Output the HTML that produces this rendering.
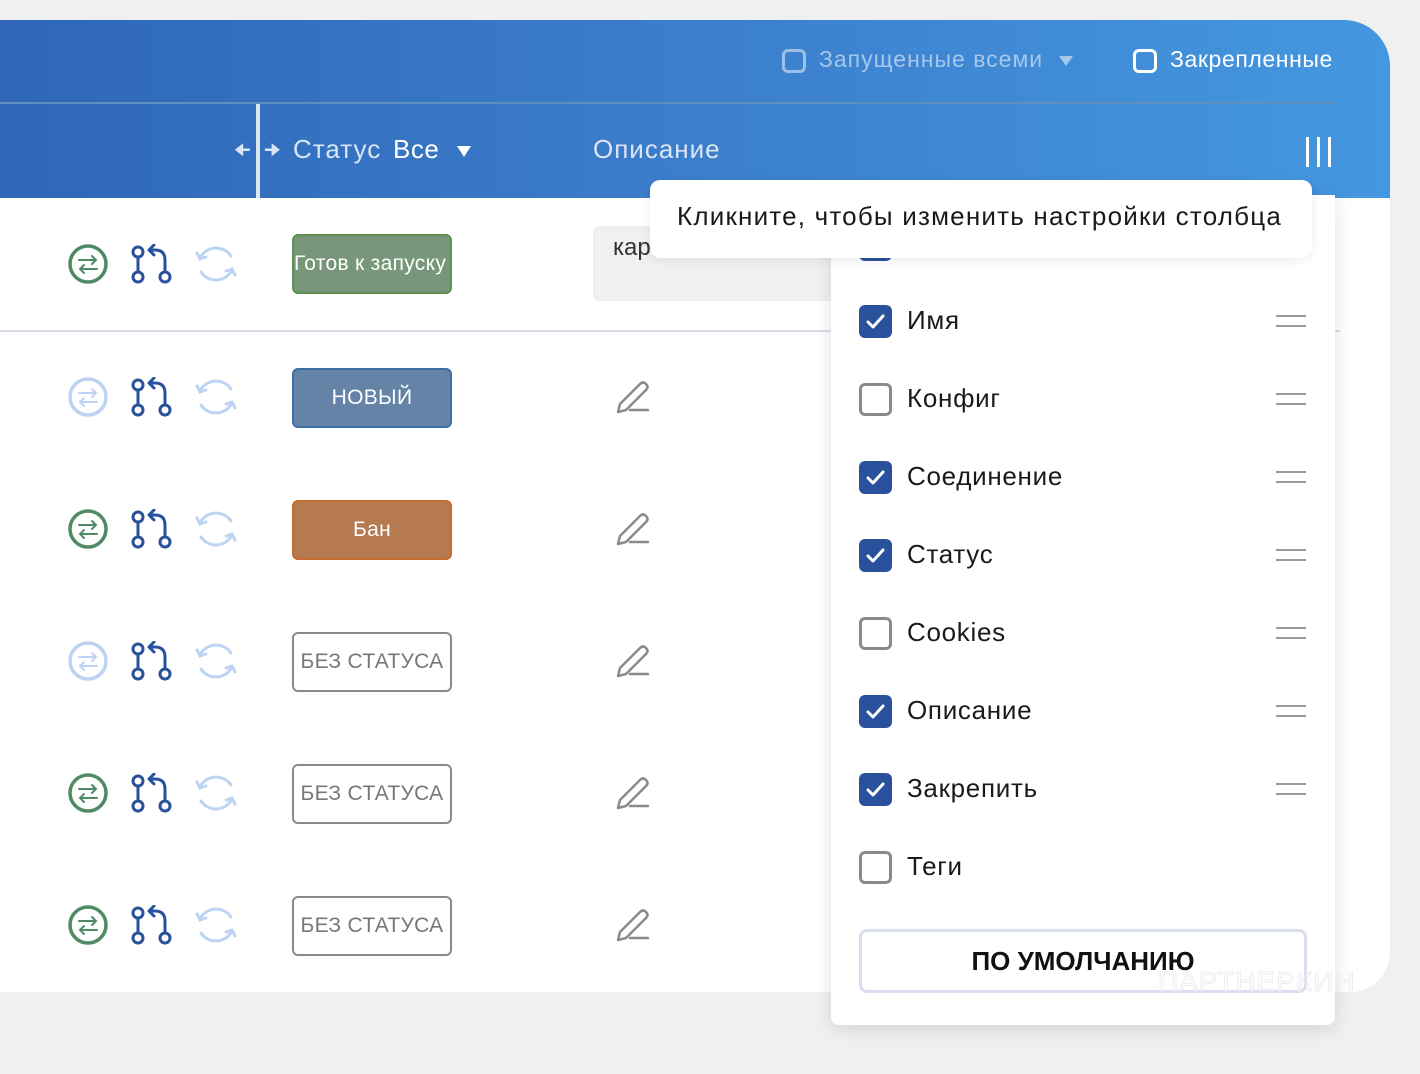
<!DOCTYPE html>
<html><head><meta charset="utf-8"><style>
*{margin:0;padding:0;box-sizing:border-box}
body{width:1420px;height:1074px;background:#f0f0f0;font-family:"Liberation Sans",sans-serif;position:relative;overflow:hidden}
.card{position:absolute;left:0;top:20px;width:1390px;height:972px;background:#fff;border-radius:0 46px 40px 0;overflow:hidden}
.hdr{position:absolute;left:0;top:0;width:1390px;height:178px;background:linear-gradient(90deg,#2f66b8 0%,#3a7cca 45%,#4597e0 100%)}
.a{position:absolute;white-space:nowrap}
.row{position:absolute;left:66px;width:190px;height:40px}
.badge{position:absolute;left:292px;width:160px;height:60px;border-radius:6px;border:2px solid;display:flex;align-items:center;justify-content:center;font-size:21px;letter-spacing:0.3px;overflow:hidden;white-space:nowrap}
.pen{position:absolute;left:612px;width:40px;height:40px}
.cb{position:absolute;left:859px;width:33px;height:33px;border-radius:6px}
.on{background:#2a519c}
.off{border:3px solid #8a8a8a;background:#fff}
.lbl{position:absolute;left:907px;font-size:26px;color:#1a1a1a;letter-spacing:0.7px}
.ham{position:absolute;left:1276px;width:30px;height:12px;border-top:2px solid #9a9a9a;border-bottom:2px solid #9a9a9a}
</style></head><body>
<div class="card">
 <div class="hdr">
  <div class="a" style="left:0;top:82px;width:1335px;height:2px;background:#5d8fbf"></div>
  <div class="a" style="left:782px;top:29px;width:24px;height:24px;border:3px solid #9cc0ea;border-radius:6px"></div>
  <div class="a" style="left:819px;top:26px;font-size:23px;color:#a6c6ec;letter-spacing:1px">Запущенные всеми</div>
  <div class="a" style="left:1059px;top:36px;width:0;height:0;border-left:7px solid transparent;border-right:7px solid transparent;border-top:10px solid #a6c6ec"></div>
  <div class="a" style="left:1133px;top:29px;width:24px;height:24px;border:3px solid #fff;border-radius:6px"></div>
  <div class="a" style="left:1170px;top:26px;font-size:23px;color:#fff;letter-spacing:0.6px">Закрепленные</div>
  <div class="a" style="left:256px;top:84px;width:4px;height:94px;background:#dbe6f5"></div>
  <div class="a" style="left:234px;top:118px;font-size:18px;color:#dbe6f5">&#129032;</div>
  <div class="a" style="left:264px;top:118px;font-size:18px;color:#dbe6f5">&#129034;</div>
  <div class="a" style="left:293px;top:114px;font-size:26px;color:#dbe6f5;letter-spacing:1px">Статус</div>
  <div class="a" style="left:393px;top:114px;font-size:26px;color:#fff;letter-spacing:0.5px">Все</div>
  <div class="a" style="left:457px;top:126px;width:0;height:0;border-left:7px solid transparent;border-right:7px solid transparent;border-top:11px solid #fff"></div>
  <div class="a" style="left:593px;top:114px;font-size:26px;color:#dbe6f5;letter-spacing:1px">Описание</div>
  <div class="a" style="left:1306px;top:117px;width:3px;height:30px;background:#fff"></div>
  <div class="a" style="left:1317px;top:117px;width:3px;height:30px;background:#fff"></div>
  <div class="a" style="left:1328px;top:117px;width:3px;height:30px;background:#fff"></div>
 </div>
 <div class="a" style="left:0;top:310px;width:1340px;height:2px;background:#d6deec"></div>
 <div class="a" style="left:593px;top:206px;width:260px;height:75px;background:#f0f0f0;border-radius:6px;font-size:24px;color:#333;padding:8px 20px">кар</div>
</div>

<svg width="0" height="0" style="position:absolute">
 <defs>
  <g id="br" fill="none" stroke="#2a519c" stroke-width="3" stroke-linecap="round" stroke-linejoin="round">
   <circle cx="72" cy="8" r="5"/><circle cx="72" cy="33" r="5"/><circle cx="99" cy="33" r="5"/>
   <line x1="72" y1="13" x2="72" y2="28"/>
   <path d="M99 28 V16 Q99 6 89 6 H84"/><path d="M88 1 L83 6 L88 11"/>
  </g>
  <g id="sy" fill="none" stroke="#bcd3f2" stroke-width="3" stroke-linecap="round">
   <path d="M134 14 A18 18 0 0 1 165 12"/><path d="M131 9 L134 15 L140 13"/>
   <path d="M166 26 A18 18 0 0 1 135 28"/><path d="M169 31 L166 25 L160 27"/>
  </g>
  <g id="swg" fill="none" stroke="#4f8a65" stroke-width="3.5"><circle cx="22" cy="20" r="18"/>
   <g stroke-width="2" stroke-linecap="round"><path d="M13 16 H30 M26 12 L30 16 L26 20"/><path d="M31 25 H14 M18 21 L14 25 L18 29"/></g></g>
  <g id="swl" fill="none" stroke="#bcd3f2" stroke-width="3.5"><circle cx="22" cy="20" r="18"/>
   <g stroke-width="2" stroke-linecap="round"><path d="M13 16 H30 M26 12 L30 16 L26 20"/><path d="M31 25 H14 M18 21 L14 25 L18 29"/></g></g>
  <g id="pn" fill="none" stroke="#8a8a8a" stroke-width="2.5" stroke-linecap="round" stroke-linejoin="round">
   <path d="M6 34 L8 26 L28 6 Q31 3 34 6 Q37 9 34 12 L14 32 Z"/><path d="M18 32 H36"/>
  </g>
  <path id="ck" d="M9 17 L14 22 L24 11" fill="none" stroke="#fff" stroke-width="3" stroke-linecap="round" stroke-linejoin="round"/>
 </defs>
</svg>

<svg class="row" style="top:244px" viewBox="0 0 190 40"><use href="#swg"/><use href="#br"/><use href="#sy"/></svg>
<svg class="row" style="top:377px" viewBox="0 0 190 40"><use href="#swl"/><use href="#br"/><use href="#sy"/></svg>
<svg class="row" style="top:509px" viewBox="0 0 190 40"><use href="#swg"/><use href="#br"/><use href="#sy"/></svg>
<svg class="row" style="top:641px" viewBox="0 0 190 40"><use href="#swl"/><use href="#br"/><use href="#sy"/></svg>
<svg class="row" style="top:773px" viewBox="0 0 190 40"><use href="#swg"/><use href="#br"/><use href="#sy"/></svg>
<svg class="row" style="top:905px" viewBox="0 0 190 40"><use href="#swg"/><use href="#br"/><use href="#sy"/></svg>

<div class="badge" style="top:234px;background:#77967a;border-color:#5e8f55;color:#fff;justify-content:flex-start;padding-left:0">Готов к запуску</div>
<div class="badge" style="top:368px;background:#6483a6;border-color:#3c6ea6;color:#fff">НОВЫЙ</div>
<div class="badge" style="top:500px;background:#b57a50;border-color:#c96a2e;color:#fff">Бан</div>
<div class="badge" style="top:632px;background:#fff;border-color:#8a8a8a;color:#777">БЕЗ СТАТУСА</div>
<div class="badge" style="top:764px;background:#fff;border-color:#8a8a8a;color:#777">БЕЗ СТАТУСА</div>
<div class="badge" style="top:896px;background:#fff;border-color:#8a8a8a;color:#777">БЕЗ СТАТУСА</div>

<svg class="pen" style="top:378px" viewBox="0 0 40 40"><use href="#pn"/></svg>
<svg class="pen" style="top:510px" viewBox="0 0 40 40"><use href="#pn"/></svg>
<svg class="pen" style="top:642px" viewBox="0 0 40 40"><use href="#pn"/></svg>
<svg class="pen" style="top:774px" viewBox="0 0 40 40"><use href="#pn"/></svg>
<svg class="pen" style="top:906px" viewBox="0 0 40 40"><use href="#pn"/></svg>

<div class="a" style="left:831px;top:195px;width:504px;height:830px;background:#fff;border-radius:0 0 8px 8px;box-shadow:0 4px 18px rgba(0,0,0,0.12)"></div>
<div class="cb on" style="top:228px"></div>

<svg class="cb on" style="top:305px" viewBox="0 0 33 33"><use href="#ck"/></svg><div class="lbl" style="top:305px">Имя</div><div class="ham" style="top:315px"></div>
<div class="cb off" style="top:383px"></div><div class="lbl" style="top:383px">Конфиг</div><div class="ham" style="top:393px"></div>
<svg class="cb on" style="top:461px" viewBox="0 0 33 33"><use href="#ck"/></svg><div class="lbl" style="top:461px">Соединение</div><div class="ham" style="top:471px"></div>
<svg class="cb on" style="top:539px" viewBox="0 0 33 33"><use href="#ck"/></svg><div class="lbl" style="top:539px">Статус</div><div class="ham" style="top:549px"></div>
<div class="cb off" style="top:617px"></div><div class="lbl" style="top:617px">Cookies</div><div class="ham" style="top:627px"></div>
<svg class="cb on" style="top:695px" viewBox="0 0 33 33"><use href="#ck"/></svg><div class="lbl" style="top:695px">Описание</div><div class="ham" style="top:705px"></div>
<svg class="cb on" style="top:773px" viewBox="0 0 33 33"><use href="#ck"/></svg><div class="lbl" style="top:773px">Закрепить</div><div class="ham" style="top:783px"></div>
<div class="cb off" style="top:851px"></div><div class="lbl" style="top:851px">Теги</div>

<div class="a" style="left:859px;top:929px;width:448px;height:64px;border:3px solid #d8def0;border-radius:8px;background:#fff;display:flex;align-items:center;justify-content:center;font-size:26px;font-weight:bold;color:#111">ПО УМОЛЧАНИЮ</div>
<div class="a" style="left:1158px;top:966px;font-size:28px;color:transparent;-webkit-text-stroke:1px #ececec;letter-spacing:1px">ПАРТНЕРКИН</div>

<div class="a" style="left:650px;top:180px;width:662px;height:78px;background:#fff;border-radius:10px;box-shadow:0 2px 10px rgba(0,0,0,0.08);font-size:26px;color:#1a1a1a;padding:21px 0 0 27px;letter-spacing:1.2px">Кликните, чтобы изменить настройки столбца</div>
</body></html>
